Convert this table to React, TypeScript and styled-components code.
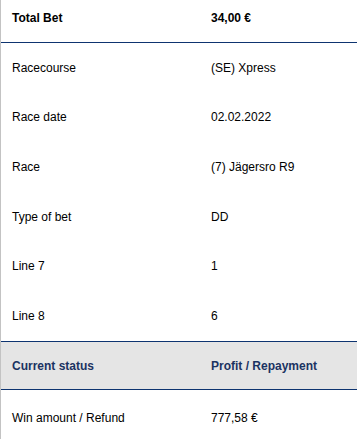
import React from "react";
import styled, { createGlobalStyle } from "styled-components";

const GlobalStyle = createGlobalStyle`
  html, body {
    margin: 0;
    padding: 0;
    background: #fff;
  }
  body {
    font-family: "Liberation Sans", Arial, sans-serif;
    font-size: 12px;
    color: #000;
  }
`;

interface RowData {
  label: string;
  value: string;
}

const details: RowData[] = [
  { label: "Racecourse", value: "(SE) Xpress" },
  { label: "Race date", value: "02.02.2022" },
  { label: "Race", value: "(7) Jägersro R9" },
  { label: "Type of bet", value: "DD" },
  { label: "Line 7", value: "1" },
  { label: "Line 8", value: "6" },
];

const BetSummary: React.FC = () => {
  return (
    <Panel>
      <GlobalStyle />
      <TotalRow>
        <Cell $bold>Total Bet</Cell>
        <Cell $bold>34,00 €</Cell>
      </TotalRow>
      {details.map((row) => (
        <Row key={row.label}>
          <Cell>{row.label}</Cell>
          <Cell>{row.value}</Cell>
        </Row>
      ))}
      <StatusRow>
        <Cell $bold $navy>Current status</Cell>
        <Cell $bold $navy>Profit / Repayment</Cell>
      </StatusRow>
      <LastRow>
        <Cell>Win amount / Refund</Cell>
        <Cell>777,58 €</Cell>
      </LastRow>
    </Panel>
  );
};

const Panel = styled.div`
  min-height: 100vh;
  box-sizing: border-box;
  border-left: 1px solid #c3c3c3;
`;

const Row = styled.div`
  display: grid;
  grid-template-columns: 199px 1fr;
  height: 49.6px;
  align-items: center;
`;

const TotalRow = styled(Row)`
  height: 43px;
  align-items: start;
  padding-top: 11px;
  box-sizing: border-box;
  border-bottom: 1px solid #0e3470;
`;

const StatusRow = styled(Row)`
  height: 49px;
  padding-top: 1px;
  box-sizing: border-box;
  background: #e5e5e5;
  border-top: 1px solid #0e3470;
  border-bottom: 1px solid #0e3470;
`;

const LastRow = styled(Row)`
  height: 56px;
`;

const Cell = styled.div<{ $bold?: boolean; $navy?: boolean }>`
  padding-left: 11px;
  line-height: 14px;
  font-weight: ${(p) => (p.$bold ? 700 : 400)};
  color: ${(p) => (p.$navy ? "#1b3362" : "#000")};
  white-space: nowrap;
`;

export default BetSummary;
